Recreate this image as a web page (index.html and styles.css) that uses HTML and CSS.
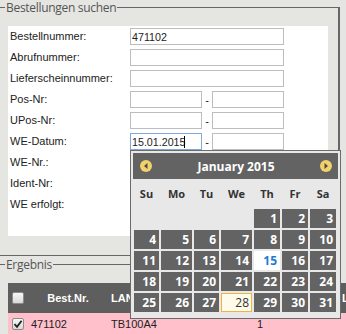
FILE: index.html
```html
<!DOCTYPE html>
<html lang="de">
<head>
	<meta charset="UTF-8">
	<title>Bestellungen suchen</title>
	<link rel="stylesheet" href="styles.css">
</head>
<body>
	<fieldset class="group">
		<legend>Bestellungen suchen</legend>
		<div class="panel">
			<div class="form-row"><label>Bestellnummer:</label><input class="field" value="471102"></div>
			<div class="form-row"><label>Abrufnummer:</label><input class="field"></div>
			<div class="form-row"><label>Lieferscheinnummer:</label><input class="field"></div>
			<div class="form-row">
				<label>Pos-Nr:</label>
				<div class="range"><input class="field half"><span class="sep">-</span><input class="field half"></div>
			</div>
			<div class="form-row">
				<label>UPos-Nr:</label>
				<div class="range"><input class="field half"><span class="sep">-</span><input class="field half"></div>
			</div>
			<div class="form-row">
				<label>WE-Datum:</label>
				<div class="range">
					<span class="caret-wrap"><input class="field half is-focused" value="15.01.2015"></span><span class="sep">-</span><input class="field half">
				</div>
			</div>
			<div class="form-row"><label>WE-Nr.:</label><input class="field"></div>
			<div class="form-row"><label>Ident-Nr:</label><input class="field"></div>
			<div class="form-row"><label>WE erfolgt:</label><span></span></div>
		</div>
	</fieldset>

	<fieldset class="group">
		<legend>Ergebnis</legend>
		<table class="results">
			<colgroup>
				<col class="c-check"><col class="c-best"><col class="c-lan"><col class="c-qty"><col class="c-pos"><col class="c-more">
			</colgroup>
			<thead>
				<tr>
					<th><span class="check"></span></th>
					<th>Best.Nr.</th>
					<th class="left">LAN-Artikel</th>
					<th>Menge</th>
					<th>Pos</th>
					<th class="left">Lieferant</th>
				</tr>
			</thead>
			<tbody>
				<tr class="selected">
					<td><span class="check"><svg width="10" height="10" viewBox="0 0 10 10"><path d="M1.5 5.2 L4 7.8 L8.6 1.8" fill="none" stroke="#222" stroke-width="1.8"/></svg></span></td>
					<td>471102</td>
					<td>TB100A4</td>
					<td class="center">1</td>
					<td></td>
					<td></td>
				</tr>
			</tbody>
		</table>
	</fieldset>

	<div class="datepicker">
		<div class="dp-header">
			<span class="dp-nav"><svg width="12" height="12" viewBox="0 0 12 12"><path d="M7.5 3 L4 6 L7.5 9 Z" fill="#4a4a4a"/></svg></span>
			<span class="dp-title">January 2015</span>
			<span class="dp-nav"><svg width="12" height="12" viewBox="0 0 12 12"><path d="M4.5 3 L8 6 L4.5 9 Z" fill="#4a4a4a"/></svg></span>
		</div>
		<div class="dp-grid">
			<span class="dp-name">Su</span><span class="dp-name">Mo</span><span class="dp-name">Tu</span><span class="dp-name">We</span><span class="dp-name">Th</span><span class="dp-name">Fr</span><span class="dp-name">Sa</span>
			<span></span><span></span><span></span><span></span>
			<span class="day">1</span><span class="day">2</span><span class="day">3</span>
			<span class="day">4</span><span class="day">5</span><span class="day">6</span><span class="day">7</span><span class="day">8</span><span class="day">9</span><span class="day">10</span>
			<span class="day">11</span><span class="day">12</span><span class="day">13</span><span class="day">14</span><span class="day active">15</span><span class="day">16</span><span class="day">17</span>
			<span class="day">18</span><span class="day">19</span><span class="day">20</span><span class="day">21</span><span class="day">22</span><span class="day">23</span><span class="day">24</span>
			<span class="day">25</span><span class="day">26</span><span class="day">27</span><span class="day today">28</span><span class="day">29</span><span class="day">30</span><span class="day">31</span>
		</div>
	</div>
</body>
</html>
```

FILE: styles.css
```css
html, body {overflow: hidden;}
body {
	margin: 0;
	position: relative;
	background-color: #e5e5e2;
	font-family: "Liberation Sans", Arial, sans-serif;
	font-size: 11px;
	color: #222;
}

/* fieldsets */
.group {
	margin: 0 6px 1px -8px;
	padding: 11px 10px 19px 12px;
	border: 1px solid #666;
	border-right-width: 2px;
	min-width: 0;
}
.group legend {
	padding: 0 1px;
	font-family: "Open Sans", sans-serif;
	font-size: 12px;
	letter-spacing: -0.3px;
	line-height: 15px;
	color: #555;
}

/* search form */
.panel {
	margin-left: 3px;
	padding: 2px 0 23px 2px;
	background-color: #fff;
	display: flex;
	flex-direction: column;
	gap: 4px;
}
.form-row {
	display: grid;
	grid-template-columns: 120px auto;
	align-items: center;
	height: 17px;
}
.form-row label {line-height: 17px;}
.field {
	box-sizing: border-box;
	width: 154px;
	height: 17px;
	margin: 0;
	padding: 0 1px;
	border: 1px solid #bdbdbd;
	font: 10.7px "Liberation Sans", Arial, sans-serif;
	color: #222;
	background: #fff;
	outline: none;
}
.field.half {width: 72px;}
.field.is-focused {border-color: #7fa9dc;}
.range {display: flex; align-items: center;}
.sep {width: 10px; text-align: center;}
.caret-wrap {position: relative; display: block; height: 17px;}
.caret-wrap::after {
	content: "";
	position: absolute;
	left: 54px;
	top: 3px;
	width: 1px;
	height: 12px;
	background: #000;
}

/* result table */
.results {
	margin-left: 3px;
	width: 432px;
	table-layout: fixed;
	border-collapse: collapse;
}
.c-check {width: 20px;}
.c-best {width: 80px;}
.c-lan {width: 122px;}
.c-qty {width: 60px;}
.c-pos {width: 50px;}
.c-more {width: 100px;}
.results th {
	height: 30px;
	padding: 0 3px;
	background-color: #5e5e5e;
	color: #fff;
	font-weight: bold;
	text-align: center;
	white-space: nowrap;
	overflow: hidden;
}
.results th.left {text-align: left;}
.results th:last-child {padding-left: 2px;}
.results td {
	height: 21px;
	padding: 0 3px;
	white-space: nowrap;
}
.results th:first-child, .results td:first-child {padding: 0 0 0 4px;}
.results td.center {text-align: center;}
.selected td {background-color: #ffc0cb;}
.check {
	box-sizing: border-box;
	display: flex;
	align-items: center;
	justify-content: center;
	width: 12px;
	height: 12px;
	border: 1px solid #8c8c8c;
	border-radius: 2px;
	background: linear-gradient(#f7f7f7, #d9d9d9);
}

/* datepicker popup */
.datepicker {
	position: absolute;
	left: 130px;
	top: 150px;
	box-sizing: border-box;
	width: 211px;
	height: 169px;
	padding: 2px;
	border: 1px solid #6b6b6b;
	background-color: #e8e8e8;
	font-family: "Open Sans", sans-serif;
	z-index: 10;
}
.dp-header {
	height: 26px;
	padding: 0 6px 0 7px;
	display: flex;
	align-items: center;
	justify-content: space-between;
	background-color: #636363;
	color: #fff;
}
.dp-title {font-size: 12px; font-weight: bold;}
.dp-nav {
	width: 12px;
	height: 12px;
	border-radius: 50%;
	background-color: #f2d16b;
	display: flex;
}
.dp-grid {
	margin-left: 1px;
	display: grid;
	grid-template-columns: 25px 31px 25px 31px 26px 26px 26px;
	grid-template-rows: 28px;
	grid-auto-rows: 19px;
	gap: 2px;
}
.dp-name {
	align-self: center;
	text-align: center;
	font-size: 11px;
	font-weight: bold;
	color: #333;
}
.day {
	box-sizing: border-box;
	padding-right: 3px;
	background-color: #636363;
	color: #fff;
	font-size: 12px;
	font-weight: bold;
	line-height: 19px;
	text-align: right;
}
.day.active {background-color: #fff; color: #1f7bd1;}
.day.today {
	background-color: #fffbea;
	border: 1px solid #f0b43c;
	padding-right: 2px;
	line-height: 17px;
	color: #333;
	font-weight: normal;
}
```
